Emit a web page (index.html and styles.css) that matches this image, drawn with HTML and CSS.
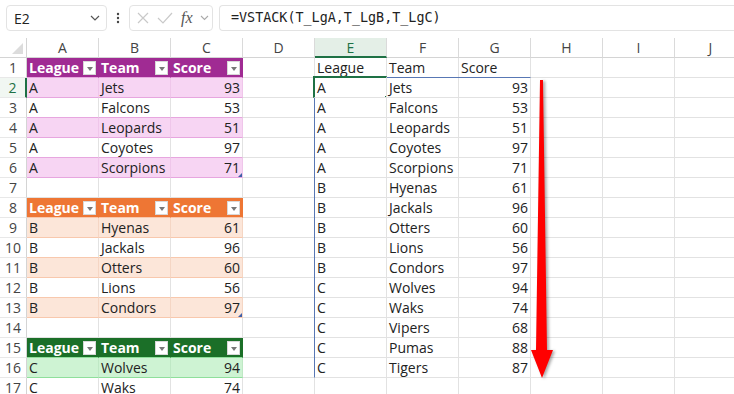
FILE: index.html
```
<!DOCTYPE html>
<html>
<head>
    <meta charset="utf-8">
    <title>VSTACK</title>
    <link rel="stylesheet" href="styles.css">
</head>
<body>

<div class="formula-bar">
    <div class="name-box">
        <span>E2</span>
        <svg class="chev" width="10" height="6" viewBox="0 0 10 6"><path d="M1 1l4 4 4-4" fill="none" stroke="#555" stroke-width="1.2"/></svg>
    </div>
    <div class="dots">
        <svg width="4" height="12" viewBox="0 0 4 12"><circle cx="2" cy="2" r="1.2" fill="#444"/><circle cx="2" cy="6" r="1.2" fill="#444"/><circle cx="2" cy="10" r="1.2" fill="#444"/></svg>
    </div>
    <div class="fx-box">
        <svg width="14" height="14" viewBox="0 0 14 14"><path d="M2 2l10 10M12 2L2 12" stroke="#c9c9c9" stroke-width="1.2"/></svg>
        <svg width="16" height="14" viewBox="0 0 16 14"><path d="M1 7l5 5L15 2" fill="none" stroke="#c9c9c9" stroke-width="1.2"/></svg>
        <span class="fx">fx</span>
        <svg width="9" height="6" viewBox="0 0 9 6"><path d="M1 1l3.5 3.5L8 1" fill="none" stroke="#aaa" stroke-width="1.1"/></svg>
    </div>
    <div class="formula">=VSTACK(T_LgA,T_LgB,T_LgC)</div>
</div>

<div class="sheet">
    <!-- column headers -->
    <div class="corner"></div>
    <div class="ch">A</div><div class="ch">B</div><div class="ch">C</div><div class="ch">D</div>
    <div class="ch on">E</div><div class="ch">F</div><div class="ch">G</div><div class="ch">H</div><div class="ch">I</div><div class="ch">J</div>

    <!-- 1 -->
    <div class="rh">1</div>
    <div class="th purple">League<i class="fb"></i></div>
    <div class="th purple">Team<i class="fb"></i></div>
    <div class="th purple">Score<i class="fb"></i></div>
    <div></div>
    <div>League</div><div>Team</div><div>Score</div><div></div><div></div><div></div>

    <!-- 2 -->
    <div class="rh on">2</div>
    <div class="band purple">A</div><div class="band purple">Jets</div><div class="band purple num">93</div>
    <div></div>
    <div>A</div><div>Jets</div><div class="num">93</div><div></div><div></div><div></div>

    <!-- 3 -->
    <div class="rh">3</div>
    <div class="plain purple">A</div><div class="plain purple">Falcons</div><div class="plain purple num">53</div>
    <div></div>
    <div>A</div><div>Falcons</div><div class="num">53</div><div></div><div></div><div></div>

    <!-- 4 -->
    <div class="rh">4</div>
    <div class="band purple">A</div><div class="band purple">Leopards</div><div class="band purple num">51</div>
    <div></div>
    <div>A</div><div>Leopards</div><div class="num">51</div><div></div><div></div><div></div>

    <!-- 5 -->
    <div class="rh">5</div>
    <div class="plain purple">A</div><div class="plain purple">Coyotes</div><div class="plain purple num">97</div>
    <div></div>
    <div>A</div><div>Coyotes</div><div class="num">97</div><div></div><div></div><div></div>

    <!-- 6 -->
    <div class="rh">6</div>
    <div class="band purple">A</div><div class="band purple">Scorpions</div><div class="band purple num end">71</div>
    <div></div>
    <div>A</div><div>Scorpions</div><div class="num">71</div><div></div><div></div><div></div>

    <!-- 7 -->
    <div class="rh">7</div>
    <div></div><div></div><div></div><div></div>
    <div>B</div><div>Hyenas</div><div class="num">61</div><div></div><div></div><div></div>

    <!-- 8 -->
    <div class="rh">8</div>
    <div class="th orange">League<i class="fb"></i></div>
    <div class="th orange">Team<i class="fb"></i></div>
    <div class="th orange">Score<i class="fb"></i></div>
    <div></div>
    <div>B</div><div>Jackals</div><div class="num">96</div><div></div><div></div><div></div>

    <!-- 9 -->
    <div class="rh">9</div>
    <div class="band orange">B</div><div class="band orange">Hyenas</div><div class="band orange num">61</div>
    <div></div>
    <div>B</div><div>Otters</div><div class="num">60</div><div></div><div></div><div></div>

    <!-- 10 -->
    <div class="rh">10</div>
    <div class="plain orange">B</div><div class="plain orange">Jackals</div><div class="plain orange num">96</div>
    <div></div>
    <div>B</div><div>Lions</div><div class="num">56</div><div></div><div></div><div></div>

    <!-- 11 -->
    <div class="rh">11</div>
    <div class="band orange">B</div><div class="band orange">Otters</div><div class="band orange num">60</div>
    <div></div>
    <div>B</div><div>Condors</div><div class="num">97</div><div></div><div></div><div></div>

    <!-- 12 -->
    <div class="rh">12</div>
    <div class="plain orange">B</div><div class="plain orange">Lions</div><div class="plain orange num">56</div>
    <div></div>
    <div>C</div><div>Wolves</div><div class="num">94</div><div></div><div></div><div></div>

    <!-- 13 -->
    <div class="rh">13</div>
    <div class="band orange">B</div><div class="band orange">Condors</div><div class="band orange num end">97</div>
    <div></div>
    <div>C</div><div>Waks</div><div class="num">74</div><div></div><div></div><div></div>

    <!-- 14 -->
    <div class="rh">14</div>
    <div></div><div></div><div></div><div></div>
    <div>C</div><div>Vipers</div><div class="num">68</div><div></div><div></div><div></div>

    <!-- 15 -->
    <div class="rh">15</div>
    <div class="th green">League<i class="fb"></i></div>
    <div class="th green">Team<i class="fb"></i></div>
    <div class="th green">Score<i class="fb"></i></div>
    <div></div>
    <div>C</div><div>Pumas</div><div class="num">88</div><div></div><div></div><div></div>

    <!-- 16 -->
    <div class="rh">16</div>
    <div class="band green">C</div><div class="band green">Wolves</div><div class="band green num">94</div>
    <div></div>
    <div>C</div><div>Tigers</div><div class="num">87</div><div></div><div></div><div></div>

    <!-- 17 -->
    <div class="rh">17</div>
    <div class="plain green">C</div><div class="plain green">Waks</div><div class="plain green num">74</div>
    <div></div>
    <div></div><div></div><div></div><div></div><div></div><div></div>

    <!-- overlays: spill range, active cell, arrow -->
    <div class="spill"></div>
    <div class="active"><span class="handle"></span></div>
    <svg class="arrow" width="40" height="310" viewBox="0 0 40 310">
        <polygon points="15,5 18,5 22,275 28,275 17,303 6,275 11,275" fill="#ff0000"/>
    </svg>
</div>

</body>
</html>
```

FILE: styles.css
```
body {
    margin: 0;
    background: #fff;
    font-family: "Open Sans", "Noto Sans", sans-serif;
    overflow: hidden;
}

/* Formula bar */

.formula-bar {
    display: flex;
    align-items: flex-start;
    height: 38px;
    padding-top: 5px;
    box-sizing: border-box;
}

.name-box {
    display: flex;
    align-items: center;
    justify-content: space-between;
    margin-left: 6px;
    width: 101px;
    height: 26px;
    padding: 0 6px 0 7px;
    box-sizing: border-box;
    border: 1px solid #e3e3e3;
    border-radius: 4px;
    font-size: 14px;
    color: #222;
}

.dots {
    display: flex;
    align-items: center;
    justify-content: center;
    width: 22px;
    height: 26px;
}

.fx-box {
    display: flex;
    align-items: center;
    gap: 7px;
    width: 84px;
    height: 26px;
    padding-left: 6px;
    box-sizing: border-box;
    border: 1px solid #e3e3e3;
    border-radius: 4px;
}

.fx {
    font-family: "Liberation Serif", serif;
    font-style: italic;
    font-size: 16px;
    color: #555;
    margin-left: 1px;
}

.formula {
    flex: 1;
    height: 26px;
    margin-left: 6px;
    padding-left: 11px;
    box-sizing: border-box;
    border: 1px solid #e3e3e3;
    border-right: none;
    border-radius: 4px 0 0 4px;
    font-family: "DejaVu Sans Mono", monospace;
    font-size: 13.4px;
    line-height: 24px;
    color: #222;
}

/* Sheet grid */

.sheet {
    position: relative;
    display: grid;
    grid-template-columns: 27px repeat(10, 72px);
    grid-auto-rows: 20px;
}

.sheet > div {
    box-sizing: border-box;
    border-right: 1px solid #e2e2e2;
    border-bottom: 1px solid #e2e2e2;
    padding: 0 2px 0 2px;
    font-size: 14px;
    line-height: 19px;
    color: #222;
    white-space: nowrap;
    overflow: hidden;
}

.sheet > .num {
    text-align: right;
}

.sheet > .corner {
    position: relative;
    border-right-color: #d4d4d4;
    border-bottom-color: #d4d4d4;
}
.corner::after {
    content: "";
    position: absolute;
    right: 3px;
    bottom: 3px;
    border-left: 11px solid transparent;
    border-bottom: 11px solid #dcdcdc;
}

.sheet > .ch {
    text-align: center;
    color: #444;
    border-right-color: #dadada;
    border-bottom-color: #d4d4d4;
}
.sheet > .ch.on {
    background: #e4efe7;
    color: #1e7145;
    border-bottom: 2px solid #1e7145;
}

.sheet > .rh {
    text-align: center;
    padding: 0;
    color: #444;
    border-right-color: #d4d4d4;
    border-bottom-color: #e8e8e8;
}
.sheet > .rh.on {
    color: #1e7145;
    background: #f1f7f2;
    border-right: 2px solid #1e7145;
}

/* Excel tables */

.sheet > .th {
    display: flex;
    align-items: center;
    justify-content: space-between;
    padding-right: 2px;
    color: #fff;
    font-weight: bold;
}
.th.purple { background: #a02b93; border-color: #a02b93; }
.th.orange { background: #ee7634; border-color: #ee7634; }
.th.green { background: #1b6f28; border-color: #1b6f28; }

.fb {
    position: relative;
    flex: none;
    width: 13px;
    height: 14px;
    background: #fff;
    border: 1px solid #d8d8d8;
    box-sizing: border-box;
}
.fb::after {
    content: "";
    position: absolute;
    left: 2.5px;
    top: 5px;
    border-left: 3.5px solid transparent;
    border-right: 3.5px solid transparent;
    border-top: 4px solid #777;
}

.band.purple { background: #f7d5f3; border-right-color: #efc6ea; }
.band.orange { background: #fce6d9; border-right-color: #f5d6c4; }
.band.green { background: #cef3d3; border-right-color: #bfe8c5; }

.sheet > .purple { border-bottom-color: #e7a6df; }
.sheet > .orange { border-bottom-color: #f8c8ad; }
.sheet > .green { border-bottom-color: #8fdf9b; }

.sheet > .end {
    position: relative;
}
.end::after {
    content: "";
    position: absolute;
    right: 0;
    bottom: 0;
    border-left: 4px solid transparent;
    border-bottom: 4px solid #3f5fa8;
}

/* Overlays */

.spill {
    position: absolute;
    left: 314px;
    top: 39px;
    width: 217px;
    height: 301px;
    border: 1px solid #5877b4;
    box-sizing: border-box;
}

.active {
    position: absolute;
    left: 313px;
    top: 38px;
    width: 74px;
    height: 22px;
    border: 2px solid #1e7145;
    box-sizing: border-box;
}
.handle {
    position: absolute;
    right: -5px;
    bottom: -5px;
    width: 5px;
    height: 5px;
    background: #1e7145;
    border: 1px solid #fff;
}

.arrow {
    position: absolute;
    left: 525px;
    top: 37px;
    filter: drop-shadow(2px 1px 1.5px rgba(0, 0, 0, 0.35));
}
```
